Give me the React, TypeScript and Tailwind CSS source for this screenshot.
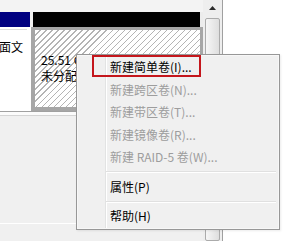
import React from "react";

const items: { label: string; disabled?: boolean; sep?: boolean }[] = [
  { label: "新建简单卷(I)..." },
  { label: "新建跨区卷(N)...", disabled: true },
  { label: "新建带区卷(T)...", disabled: true },
  { label: "新建镜像卷(R)...", disabled: true },
  { label: "新建 RAID-5 卷(W)...", disabled: true },
  { label: "", sep: true },
  { label: "属性(P)" },
  { label: "", sep: true },
  { label: "帮助(H)" },
];

export default function App() {
  return (
    <div className="relative flex w-[301px] h-[241px] overflow-hidden bg-white font-['Noto_Sans_CJK_SC','Microsoft_YaHei',sans-serif] text-[12px] text-black">
      {/* main disk area */}
      <div className="flex flex-col w-[203px] bg-[#f0f0f0]">
        <div className="h-[12px] bg-[#f3f3f3]" />
        <div className="flex h-[15px]">
          <div className="w-[30px] bg-[#000080]" />
          <div className="w-[3px] bg-[#f0f0f0]" />
          <div className="w-[167px] bg-black" />
          <div className="w-[3px] bg-[#ececec]" />
        </div>
        <div className="flex h-[84px]">
          <div className="w-[31px] bg-white flex flex-col">
            <div className="mt-[2px] h-px w-[27px] bg-[#dcdcdc]" />
            <div className="mt-[9px] ml-[-1px] leading-[16px] whitespace-nowrap">面文</div>
          </div>
          <div className="w-[172px] border-l-4 border-t-[3px] border-r-[3px] border-b-4 border-[#a6a6a6] bg-white bg-[repeating-linear-gradient(135deg,transparent_0px,transparent_3.45px,#b4b4b4_3.45px,#b4b4b4_4.25px)]">
            <div className="pl-[6px] pt-[22px] leading-[16px] whitespace-nowrap">
              <div>25.51 GB</div>
              <div>未分配</div>
            </div>
          </div>
        </div>
        <div className="h-px bg-[#a0a0a0]" />
        <div className="h-[3px] bg-[#fbfbfb]" />
        <div className="h-px bg-[#d4d4d4]" />
        <div className="flex-1 bg-[#f0f0f0] pt-[107px]">
          <div className="h-px bg-white" />
        </div>
      </div>

      {/* scrollbar */}
      <div className="flex flex-col items-center w-[19px] bg-[#eeeeee]">
        <svg width="7" height="4" viewBox="0 0 7 4" className="mt-[6px]">
          <polygon points="3.5,0 7,4 0,4" fill="#2a2a2a" />
        </svg>
        <div className="mt-[8px] w-[15px] flex-1 rounded-[2px] border border-[#ababab] bg-gradient-to-r from-[#f6f6f6] to-[#dedede]" />
      </div>
      <div className="w-px bg-[#a0a0a0]" />
      <div className="flex-1 bg-white" />

      {/* context menu */}
      <div className="absolute left-[76px] top-[54px] w-[204px] h-[176px] border border-[#979797] bg-[#f0f0f0] shadow-[1px_1px_2px_rgba(0,0,0,0.08)]">
        <div className="absolute inset-0 border border-[#f7f7f7]" />
        <div className="absolute top-[1px] bottom-[1px] left-[28px] w-px bg-[#e2e3e3]" />
        <div className="absolute top-[1px] bottom-[1px] left-[29px] w-px bg-white" />
        <div className="relative flex flex-col pt-[1px]">
          {items.map((it, i) =>
            it.sep ? (
              <div key={i} className="h-[7px] flex flex-col justify-center pl-[29px] pr-[3px]">
                <div className="h-px bg-[#e0e0e0]" />
                <div className="h-px bg-white" />
              </div>
            ) : (
              <div
                key={i}
                className={
                  "h-[22.5px] flex items-center pl-[33px] whitespace-nowrap " +
                  (it.disabled ? "text-[#9d9d9d]" : "text-black")
                }
              >
                {it.label}
              </div>
            )
          )}
        </div>
      </div>

      {/* red annotation box */}
      <div className="absolute left-[92px] top-[55px] w-[109px] h-[22px] border-2 border-[#c4161c]" />
    </div>
  );
}
